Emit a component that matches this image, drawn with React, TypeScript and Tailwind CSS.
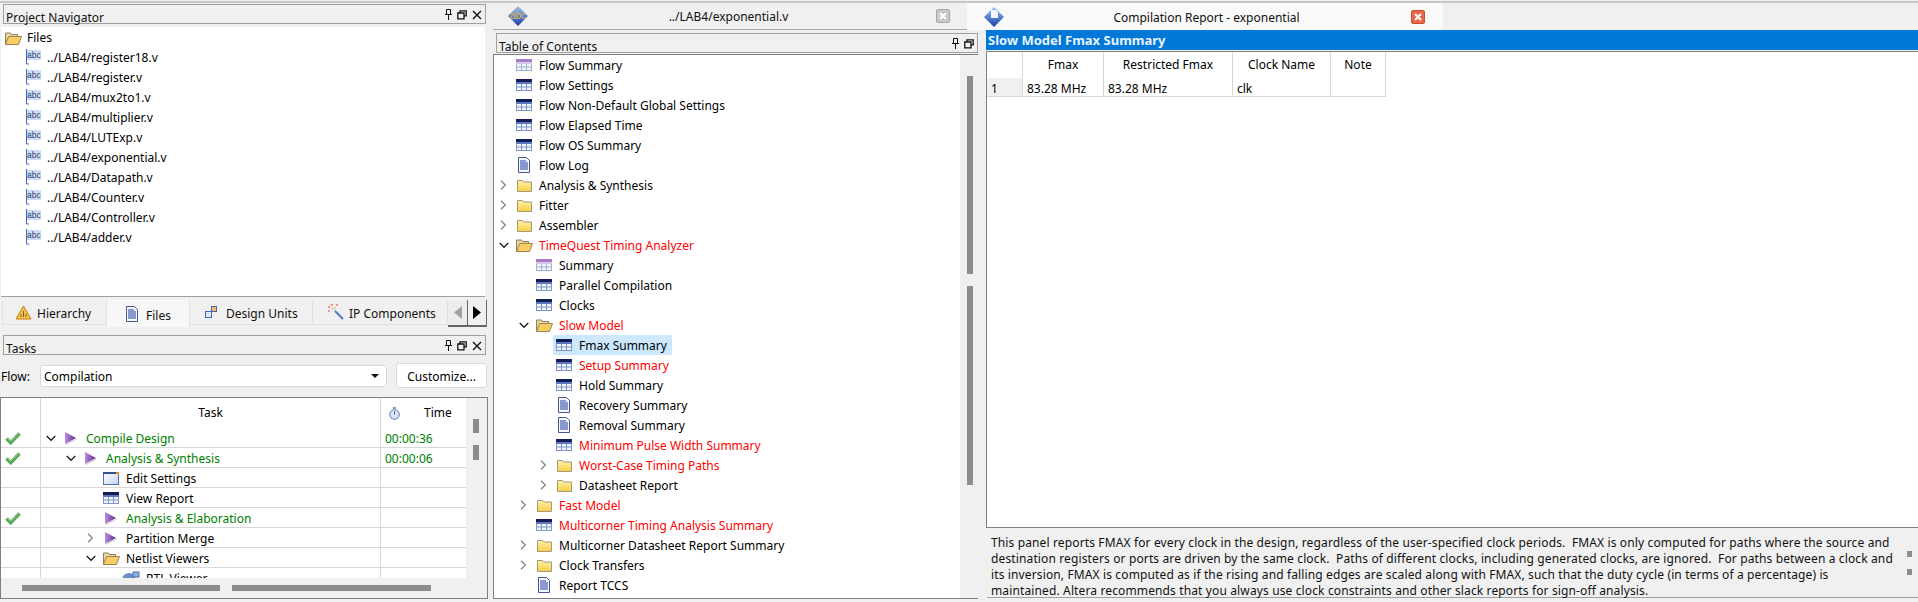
import { ReactNode } from 'react';

type IconKind = 'grid' | 'gridPurple' | 'doc' | 'folder' | 'open' | 'window' | 'play' | 'rtl';
type Chevron = 'open' | 'closed';

type TreeItem = {
    label: string;
    level: number;
    icon: IconKind;
    chevron?: Chevron;
    color?: 'red' | 'green';
    selected?: boolean;
};

const files = ['register18', 'register', 'mux2to1', 'multiplier', 'LUTExp', 'exponential', 'Datapath', 'Counter', 'Controller', 'adder'];

const tocItems: TreeItem[] = [
    { label: 'Flow Summary', level: 0, icon: 'gridPurple' },
    { label: 'Flow Settings', level: 0, icon: 'grid' },
    { label: 'Flow Non-Default Global Settings', level: 0, icon: 'grid' },
    { label: 'Flow Elapsed Time', level: 0, icon: 'grid' },
    { label: 'Flow OS Summary', level: 0, icon: 'grid' },
    { label: 'Flow Log', level: 0, icon: 'doc' },
    { label: 'Analysis & Synthesis', level: 0, icon: 'folder', chevron: 'closed' },
    { label: 'Fitter', level: 0, icon: 'folder', chevron: 'closed' },
    { label: 'Assembler', level: 0, icon: 'folder', chevron: 'closed' },
    { label: 'TimeQuest Timing Analyzer', level: 0, icon: 'open', chevron: 'open', color: 'red' },
    { label: 'Summary', level: 1, icon: 'gridPurple' },
    { label: 'Parallel Compilation', level: 1, icon: 'grid' },
    { label: 'Clocks', level: 1, icon: 'grid' },
    { label: 'Slow Model', level: 1, icon: 'open', chevron: 'open', color: 'red' },
    { label: 'Fmax Summary', level: 2, icon: 'grid', selected: true },
    { label: 'Setup Summary', level: 2, icon: 'grid', color: 'red' },
    { label: 'Hold Summary', level: 2, icon: 'grid' },
    { label: 'Recovery Summary', level: 2, icon: 'doc' },
    { label: 'Removal Summary', level: 2, icon: 'doc' },
    { label: 'Minimum Pulse Width Summary', level: 2, icon: 'grid', color: 'red' },
    { label: 'Worst-Case Timing Paths', level: 2, icon: 'folder', chevron: 'closed', color: 'red' },
    { label: 'Datasheet Report', level: 2, icon: 'folder', chevron: 'closed' },
    { label: 'Fast Model', level: 1, icon: 'folder', chevron: 'closed', color: 'red' },
    { label: 'Multicorner Timing Analysis Summary', level: 1, icon: 'grid', color: 'red' },
    { label: 'Multicorner Datasheet Report Summary', level: 1, icon: 'folder', chevron: 'closed' },
    { label: 'Clock Transfers', level: 1, icon: 'folder', chevron: 'closed' },
    { label: 'Report TCCS', level: 1, icon: 'doc' },
];

const taskItems: (TreeItem & { done?: boolean; time?: string })[] = [
    { label: 'Compile Design', level: 0, icon: 'play', chevron: 'open', color: 'green', done: true, time: '00:00:36' },
    { label: 'Analysis & Synthesis', level: 1, icon: 'play', chevron: 'open', color: 'green', done: true, time: '00:00:06' },
    { label: 'Edit Settings', level: 2, icon: 'window' },
    { label: 'View Report', level: 2, icon: 'grid' },
    { label: 'Analysis & Elaboration', level: 2, icon: 'play', color: 'green', done: true },
    { label: 'Partition Merge', level: 2, icon: 'play', chevron: 'closed' },
    { label: 'Netlist Viewers', level: 2, icon: 'open', chevron: 'open' },
    { label: 'RTL Viewer', level: 3, icon: 'rtl' },
];

function GridIcon({ purple }: { purple?: boolean }) {
    const top = purple ? '#a77bc9' : '#141d55';
    const line = purple ? '#a3b3cf' : '#7f94c2';
    return (
        <svg width="16" height="12" viewBox="0 0 16 12">
            <rect x="0.5" y="0.5" width="15" height="11" fill="#f1f5fc" stroke={line} />
            <rect x="0" y="0" width="16" height="3" fill={top} />
            <rect x="0" y="3" width="16" height="2" fill={purple ? '#d5c6e6' : '#5a78bd'} />
            <path d="M0 8h16M5.5 5v6.5M10.5 5v6.5" stroke={line} fill="none" />
        </svg>
    );
}

function DocIcon() {
    return (
        <svg width="14" height="16" viewBox="0 0 14 16">
            <path d="M1.5.5h8l3 3v12h-11z" fill="#f4f7fd" stroke="#45598f" />
            <path d="M3 4h6M3 6h8M3 8h8M3 10h8M3 12h8" stroke="#1f3a9e" fill="none" />
        </svg>
    );
}

function FolderIcon() {
    return (
        <svg width="15" height="13" viewBox="0 0 15 13">
            <defs>
                <linearGradient id="folderFill" x1="0" y1="0" x2="0" y2="1">
                    <stop offset="0" stopColor="#fff2a8" />
                    <stop offset="1" stopColor="#f7cf45" />
                </linearGradient>
            </defs>
            <path d="M.5 12.5V1.5h5l1 1.5h8v9.5z" fill="url(#folderFill)" stroke="#a59a7a" />
        </svg>
    );
}

function OpenFolderIcon() {
    return (
        <svg width="17" height="13" viewBox="0 0 17 13">
            <path d="M.5 12.5V1h5l1 1.5h6v2" fill="#e8d7a8" stroke="#8e7f5a" />
            <path d="M.5 12.5l3-8h13l-3 8z" fill="#f8ce62" stroke="#9c8450" />
        </svg>
    );
}

function WindowIcon() {
    return (
        <svg width="16" height="13" viewBox="0 0 16 13">
            <defs>
                <linearGradient id="windowFill" x1="0" y1="0" x2="1" y2="1">
                    <stop offset="0" stopColor="#ffffff" />
                    <stop offset="1" stopColor="#c5d3ee" />
                </linearGradient>
            </defs>
            <rect x="0.5" y="0.5" width="15" height="12" fill="url(#windowFill)" stroke="#5570ad" />
            <rect x="0" y="0" width="16" height="2" fill="#35508f" />
            <rect x="13" y="0" width="3" height="2" fill="#f08a24" />
        </svg>
    );
}

function PlayIcon() {
    return (
        <svg width="12" height="13" viewBox="0 0 12 13">
            <defs>
                <linearGradient id="playFill" x1="0" y1="0" x2="1" y2="0">
                    <stop offset="0" stopColor="#b98fdc" />
                    <stop offset="1" stopColor="#5d2c8e" />
                </linearGradient>
            </defs>
            <path d="M1 12.5l10.5-5.5" stroke="#c8c8c8" fill="none" />
            <path d="M0 0l11 6-11 6z" fill="url(#playFill)" />
        </svg>
    );
}

function RtlIcon() {
    return (
        <svg width="20" height="14" viewBox="0 0 20 14">
            <ellipse cx="8" cy="9" rx="7" ry="7" fill="#6d8fc9" />
            <rect x="12" y="1" width="6" height="5" fill="#8fb0de" stroke="#4e6ea8" />
        </svg>
    );
}

function TreeIcon({ kind }: { kind: IconKind }) {
    if (kind === 'grid') return <GridIcon />;
    if (kind === 'gridPurple') return <GridIcon purple />;
    if (kind === 'doc') return <DocIcon />;
    if (kind === 'folder') return <FolderIcon />;
    if (kind === 'open') return <OpenFolderIcon />;
    if (kind === 'window') return <WindowIcon />;
    if (kind === 'rtl') return <RtlIcon />;
    return <PlayIcon />;
}

function ChevronMark({ state }: { state: Chevron }) {
    if (state === 'open') {
        return (
            <svg width="10" height="7" viewBox="0 0 10 7">
                <path d="M.7 1l4.3 4.3L9.3 1" stroke="#222" strokeWidth="1.4" fill="none" />
            </svg>
        );
    }
    return (
        <svg width="7" height="10" viewBox="0 0 7 10">
            <path d="M1 .7l4.3 4.3L1 9.3" stroke="#8a8a8a" strokeWidth="1.4" fill="none" />
        </svg>
    );
}

function TreeRow({ item }: { item: TreeItem }) {
    const textColor = item.color === 'red' ? 'text-[#ff0000]' : item.color === 'green' ? 'text-[#008000]' : 'text-black';
    return (
        <div className="h-[20px] flex items-center" style={{ paddingLeft: item.level * 20 }}>
            <div className="w-[19px] flex justify-center items-center">{item.chevron && <ChevronMark state={item.chevron} />}</div>
            <div className={`flex items-center h-[20px] rounded-[2px] ${item.selected ? 'bg-[#cce8ff] pr-[5px]' : ''}`}>
                <div className="w-[22px] flex justify-center items-center"><TreeIcon kind={item.icon} /></div>
                <span className={`ml-[4px] pt-[2px] whitespace-nowrap ${textColor}`}>{item.label}</span>
            </div>
        </div>
    );
}

function DockButtons({ close = true }: { close?: boolean }) {
    return (
        <div className="flex items-center gap-[4px] pt-[1px]">
            <svg width="9" height="11" viewBox="0 0 9 11">
                <path d="M2.5.5h4v5h-4zM1 5.5h7M4.5 5.5V11" stroke="#111" fill="none" />
            </svg>
            <svg width="10" height="10" viewBox="0 0 10 10">
                <path d="M3 2.5V.8h6.2v5H7M.8 3h6.2v5.8H.8z" stroke="#111" strokeWidth="1.3" fill="none" />
            </svg>
            {close && (
                <svg width="10" height="10" className="ml-[1px]" viewBox="0 0 10 10">
                    <path d="M1 1l8 8M9 1l-8 8" stroke="#111" strokeWidth="1.4" fill="none" />
                </svg>
            )}
        </div>
    );
}

function DockHeader({ title, close, className }: { title: string; close?: boolean; className: string }) {
    return (
        <div className={`h-[20px] flex justify-between border border-[#a0a0a0] bg-[#f0f0f0] pl-[2px] pr-[3px] ${className}`}>
            <span className="leading-[25px] text-[#111]">{title}</span>
            <DockButtons close={close} />
        </div>
    );
}

function AbcFileIcon() {
    return (
        <svg width="15" height="16" viewBox="0 0 15 16">
            <rect x="1" y="1" width="14" height="10" fill="#cddcf3" />
            <text x="1" y="8.5" fontSize="8.5" fontFamily="Liberation Sans, sans-serif" fill="#33476d">abc</text>
            <path d="M.5 0v15M.5 15H3" stroke="#3f68c8" fill="none" />
        </svg>
    );
}

function NavTab({ icon, label, className, active }: { icon: ReactNode; label: string; className: string; active?: boolean }) {
    return (
        <div className={`flex items-center border-r border-[#e2e2e2] ${active ? 'h-[27px] bg-[#f7f7f7] pt-[1px]' : 'h-[25px] border-b'} ${className}`}>
            {icon}
            <span className="pt-[3px] text-[#111]">{label}</span>
        </div>
    );
}

function Diamond({ id, children }: { id: string; children: ReactNode }) {
    return (
        <svg width="22" height="22" viewBox="0 0 22 22">
            <defs>
                <linearGradient id={id} x1="0" y1="0" x2="0" y2="1">
                    <stop offset="0" stopColor="#a6c0ea" />
                    <stop offset="0.55" stopColor="#4f7cce" />
                    <stop offset="1" stopColor="#173e96" />
                </linearGradient>
            </defs>
            <path d="M11 1l10 10-10 10L1 11z" fill={`url(#${id})`} />
            {children}
        </svg>
    );
}

function Check() {
    return (
        <svg width="16" height="14" viewBox="0 0 16 14">
            <path d="M1.5 7.5l4.2 4.2L14.5 2.5" stroke="#56a556" strokeWidth="3.4" fill="none" />
            <path d="M2.2 7l3.5 3.5L13.8 2.4" stroke="#93d58e" strokeWidth="1" fill="none" />
        </svg>
    );
}

export default function App() {
    return (
        <div className="w-[1918px] h-[602px] overflow-hidden bg-[#f0f0f0] pt-[1px] font-['Noto_Sans',sans-serif] text-[12px] text-black">
            <div className="h-[2px] bg-[#c6c6c6]" />
            <div className="flex">
                {/* left dock */}
                <div className="w-[493px] pt-[1px]">
                    <DockHeader title="Project Navigator" className="ml-[3px] w-[483px]" />
                    <div className="mt-[3px] ml-[1px] w-[484px] h-[270px] bg-white border-b border-[#a0a0a0]">
                        <div className="h-[20px] flex items-center pl-[4px] pt-[2px]">
                            <div className="w-[22px]"><OpenFolderIcon /></div>
                            <span>Files</span>
                        </div>
                        {files.map(name => (
                            <div key={name} className="h-[20px] flex items-center pl-[25px]">
                                <div className="w-[21px]"><AbcFileIcon /></div>
                                <span className="pt-[2px]">../LAB4/{name}.v</span>
                            </div>
                        ))}
                    </div>
                    <div className="mt-[3px] ml-[2px] w-[486px] flex items-start">
                        <NavTab
                            label="Hierarchy"
                            className="w-[105px] pl-[12px] gap-[5px] border-l"
                            icon={
                                <svg width="17" height="15" viewBox="0 0 17 15">
                                    <path d="M8.5 1L16 14H1z" fill="#f6c344" stroke="#c77a1c" />
                                    <path d="M6 12V9M8.5 12V6M11 12V9" stroke="#74603a" fill="none" />
                                </svg>
                            }
                        />
                        <NavTab active label="Files" className="w-[83px] pl-[18px] gap-[7px]" icon={<DocIcon />} />
                        <NavTab
                            label="Design Units"
                            className="w-[123px] pl-[15px] gap-[9px]"
                            icon={
                                <svg width="12" height="12" viewBox="0 0 12 12">
                                    <rect x="0.5" y="5.5" width="6" height="6" fill="#dfe8f8" stroke="#3f68b8" />
                                    <rect x="6.5" y="0.5" width="5" height="5" fill="#f4b860" stroke="#3f68b8" />
                                </svg>
                            }
                        />
                        <NavTab
                            label="IP Components"
                            className="w-[135px] pl-[14px] gap-[5px]"
                            icon={
                                <svg width="17" height="16" viewBox="0 0 17 16">
                                    <path d="M5 4l11 11" stroke="#4f78c4" strokeWidth="2" fill="none" />
                                    <path d="M5 4l3 3" stroke="#e8e8e8" strokeWidth="2" fill="none" />
                                    <path d="M1 3h2M5 0v2M9 1h2M1 7h2" stroke="#e8432e" fill="none" />
                                    <path d="M7 4h2M3 1h1" stroke="#e8b02e" fill="none" />
                                </svg>
                            }
                        />
                        <div className="w-[19px] h-[27px] flex items-center justify-center border-b-2 border-[#666] bg-[#ececec]">
                            <svg width="8" height="13" viewBox="0 0 8 13"><path d="M8 0v13L0 6.5z" fill="#a0a0a0" /></svg>
                        </div>
                        <div className="w-[20px] h-[27px] flex items-center justify-center border-b-2 border-x border-[#666] bg-[#f0f0f0]">
                            <svg width="8" height="13" viewBox="0 0 8 13"><path d="M0 0v13l8-6.5z" fill="#000" /></svg>
                        </div>
                    </div>
                    <DockHeader title="Tasks" className="mt-[8px] ml-[3px] w-[483px]" />
                    <div className="mt-[8px] h-[25px] flex items-center">
                        <span className="ml-[1px] w-[39px] pt-[2px]">Flow:</span>
                        <div className="w-[347px] h-[22px] flex items-center justify-between bg-white border border-[#d9d9d9] rounded-[3px] pl-[3px] pr-[7px]">
                            <span className="pt-[2px]">Compilation</span>
                            <svg width="8" height="4" viewBox="0 0 8 4"><path d="M0 0h8L4 4z" fill="#111" /></svg>
                        </div>
                        <div className="ml-[9px] w-[91px] h-[25px] pt-[2px] flex items-center justify-center bg-white border border-[#d9d9d9] rounded-[3px]">Customize...</div>
                    </div>
                    <div className="mt-[9px] w-[488px] h-[202px] border border-[#808080] flex flex-col">
                        <div className="h-[180px] flex overflow-hidden">
                            <div className="flex-1 min-w-0 h-[180px] bg-white overflow-hidden">
                                <div className="h-[30px] flex">
                                    <div className="w-[40px] border-r border-[#d8d8d8]" />
                                    <div className="w-[340px] border-r border-[#d8d8d8] flex items-center justify-center">Task</div>
                                    <div className="flex-1 flex items-center pl-[8px] gap-[24px]">
                                        <svg width="11" height="13" viewBox="0 0 11 13">
                                            <circle cx="5.5" cy="7.5" r="4.8" fill="#dbe6f7" stroke="#5576b5" />
                                            <path d="M5.5 4.5v3" stroke="#2f4f9b" fill="none" />
                                            <path d="M4 1h3" stroke="#5576b5" strokeWidth="1.4" fill="none" />
                                        </svg>
                                        <span>Time</span>
                                    </div>
                                </div>
                                {taskItems.map(item => (
                                    <div key={item.label} className="h-[20px] flex border-b border-[#d8d8d8]">
                                        <div className="w-[40px] border-r border-[#d8d8d8] flex items-center pl-[4px]">{item.done && <Check />}</div>
                                        <div className="w-[340px] border-r border-[#d8d8d8]"><TreeRow item={item} /></div>
                                        <div className="flex-1 pl-[4px] leading-[22px] text-[#008000]">{item.time}</div>
                                    </div>
                                ))}
                            </div>
                            <div className="w-[21px] pl-[7px] pt-[21px]">
                                <div className="w-[6px] h-[14px] bg-[#8c8c8c]" />
                                <div className="mt-[12px] w-[6px] h-[15px] bg-[#8c8c8c]" />
                            </div>
                        </div>
                        <div className="mt-[7px] flex pl-[21px]">
                            <div className="w-[198px] h-[6px] bg-[#8c8c8c]" />
                            <div className="ml-[12px] w-[199px] h-[6px] bg-[#8c8c8c]" />
                        </div>
                    </div>
                </div>

                {/* editor area */}
                <div className="flex-1 min-w-0">
                    <div className="h-[27px] flex">
                        <div className="w-[474px] h-[27px] flex items-center border-b border-[#a8a8a8]">
                            <div className="ml-[14px] flex"><Diamond id="abcTab"><text x="3" y="14" fontSize="10" fontFamily="Liberation Sans, sans-serif" fill="#e6b63e">abc</text></Diamond></div>
                            <span className="flex-1 text-center pr-[8px] pt-[2px] text-[#111]">../LAB4/exponential.v</span>
                            <div className="mr-[17px] w-[14px] h-[14px] rounded-[2px] bg-[#c8c8c8] border border-[#a8a8a8] flex items-center justify-center">
                                <svg width="8" height="8" viewBox="0 0 8 8"><path d="M1 1l6 6M7 1L1 7" stroke="#fff" strokeWidth="2" fill="none" /></svg>
                            </div>
                        </div>
                        <div className="w-[476px] h-[27px] flex items-center bg-[#f9f9f9]">
                            <div className="ml-[16px] flex">
                                <Diamond id="repTab"><path d="M8 4h5l2 2v6H8z" fill="#f4f7fd" /></Diamond>
                            </div>
                            <span className="flex-1 text-center pr-[3px] pt-[2px] text-[#111]">Compilation Report - exponential</span>
                            <div className="mr-[18px] w-[14px] h-[14px] rounded-[2px] bg-[#e8694a] border border-[#c8502e] flex items-center justify-center">
                                <svg width="8" height="8" viewBox="0 0 8 8"><path d="M1 1l6 6M7 1L1 7" stroke="#fff" strokeWidth="2" fill="none" /></svg>
                            </div>
                        </div>
                    </div>
                    <div className="flex">
                        <div className="w-[493px] pt-[3px]">
                            <DockHeader title="Table of Contents" close={false} className="ml-[3px] w-[482px]" />
                            <div className="mt-[1px] w-[485px] h-[545px] flex border border-[#808080] border-r-0">
                                <div className="flex-1 min-w-0 bg-white overflow-hidden">
                                    {tocItems.map(item => <TreeRow key={item.label + item.level} item={item} />)}
                                </div>
                                <div className="w-[18px] pl-[7px] pt-[21px]">
                                    <div className="w-[6px] h-[198px] bg-[#8c8c8c]" />
                                    <div className="mt-[12px] w-[6px] h-[199px] bg-[#8c8c8c]" />
                                </div>
                            </div>
                        </div>
                        <div className="flex-1 min-w-0">
                            <div className="h-[20px] bg-[#0078d7] pl-[2px] text-[13px] leading-[20px] font-bold text-[#e8f3ff]">Slow Model Fmax Summary</div>
                            <div className="mt-[1px] h-[477px] bg-white border border-r-0 border-[#808080]">
                                <div className="w-[399px] grid grid-cols-[36px_81px_129px_98px_55px] grid-rows-[26px_19px]">
                                    <div className="border-r border-[#d8d8d8]" />
                                    <div className="border-r border-[#d8d8d8] flex items-center justify-center">Fmax</div>
                                    <div className="border-r border-[#d8d8d8] flex items-center justify-center">Restricted Fmax</div>
                                    <div className="border-r border-[#d8d8d8] flex items-center justify-center">Clock Name</div>
                                    <div className="border-r border-[#d8d8d8] flex items-center justify-center">Note</div>
                                    <div className="border-r border-b border-[#d8d8d8] bg-[#f0f0f0] pl-[4px] pt-[3px] flex items-center">1</div>
                                    <div className="border-r border-b border-[#d8d8d8] pl-[4px] pt-[3px] flex items-center">83.28 MHz</div>
                                    <div className="border-r border-b border-[#d8d8d8] pl-[4px] pt-[3px] flex items-center">83.28 MHz</div>
                                    <div className="border-r border-b border-[#d8d8d8] pl-[4px] pt-[3px] flex items-center">clk</div>
                                    <div className="border-r border-b border-[#d8d8d8]" />
                                </div>
                            </div>
                            <div className="mt-[2px] ml-[1px] h-[68px] flex border-b border-[#a0a0a0] pt-[5px] pl-[4px] leading-[16px] tracking-[0.13px] whitespace-pre text-[#111]">
                                <div className="w-[916px]">
                                    <div>This panel reports FMAX for every clock in the design, regardless of the user-specified clock periods.  FMAX is only computed for paths where the source and</div>
                                    <div>destination registers or ports are driven by the same clock.  Paths of different clocks, including generated clocks, are ignored.  For paths between a clock and</div>
                                    <div>its inversion, FMAX is computed as if the rising and falling edges are scaled along with FMAX, such that the duty cycle (in terms of a percentage) is</div>
                                    <div>maintained. Altera recommends that you always use clock constraints and other slack reports for sign-off analysis.</div>
                                </div>
                                <div className="pt-[16px]">
                                    <div className="w-[5px] h-[6px] bg-[#8c8c8c]" />
                                    <div className="mt-[12px] w-[5px] h-[6px] bg-[#8c8c8c]" />
                                </div>
                            </div>
                        </div>
                    </div>
                </div>
            </div>
        </div>
    );
}
